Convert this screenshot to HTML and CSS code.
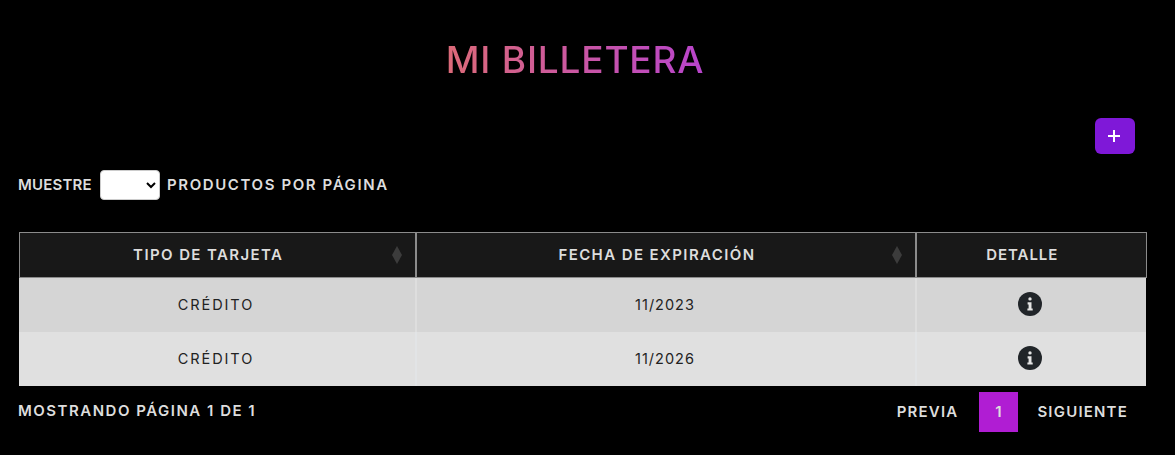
FILE: index.html
```html
<!DOCTYPE html>
<html lang="es">
<head>
  <meta charset="UTF-8" />
  <title>Mi Billetera</title>
  <link rel="stylesheet" href="styles.css">
</head>
<body>
  <h1 class="title"><span>MI BILLETERA</span></h1>
  <div class="actions">
    <button class="add-btn" type="button">
      <svg width="14" height="14" viewBox="0 0 14 14"><path d="M7 1v12M1 7h12" stroke="#fff" stroke-width="2"/></svg>
    </button>
  </div>
  <div class="length">
    <span class="length-first">MUESTRE</span>
    <select class="length-select"><option></option></select>
    <span>PRODUCTOS POR PÁGINA</span>
  </div>
  <table class="cards">
    <colgroup>
      <col class="col-type"><col class="col-date"><col class="col-detail">
    </colgroup>
    <thead>
      <tr>
        <th>TIPO DE TARJETA<i class="sort"></i></th>
        <th>FECHA DE EXPIRACIÓN<i class="sort"></i></th>
        <th class="th-detail">DETALLE</th>
      </tr>
    </thead>
    <tbody>
      <tr class="odd">
        <td>CRÉDITO</td>
        <td>11/2023</td>
        <td><svg class="info" width="24" height="24" viewBox="0 0 24 24"><circle cx="12" cy="12" r="12" fill="#212529"/><path d="M12 5.2a1.7 1.7 0 1 1 0 3.4a1.7 1.7 0 0 1 0-3.4zM9.6 10.2h3.9v6.2h1.2v2.2H9.4v-2.2h1.2v-4H9.6z" fill="#e4e4e4"/></svg></td>
      </tr>
      <tr class="even">
        <td>CRÉDITO</td>
        <td>11/2026</td>
        <td><svg class="info" width="24" height="24" viewBox="0 0 24 24"><circle cx="12" cy="12" r="12" fill="#212529"/><path d="M12 5.2a1.7 1.7 0 1 1 0 3.4a1.7 1.7 0 0 1 0-3.4zM9.6 10.2h3.9v6.2h1.2v2.2H9.4v-2.2h1.2v-4H9.6z" fill="#e4e4e4"/></svg></td>
      </tr>
    </tbody>
  </table>
  <div class="footer">
    <div class="info-text">MOSTRANDO PÁGINA 1 DE 1</div>
    <div class="pager">
      <span class="page-link">PREVIA</span>
      <span class="page-current">1</span>
      <span class="page-link">SIGUIENTE</span>
    </div>
  </div>
</body>
</html>
```

FILE: styles.css
```css
body {
  margin: 0;
  padding: 0 29px 0 18px;
  background-color: #000;
  color: #ddd;
  font-family: "Inter", sans-serif;
  font-size: 15px;
  font-weight: 600;
  height: 455px;
  box-sizing: border-box;
  overflow: hidden;
}
.title {
  margin: 0;
  padding: 37px 14px 0 0;
  height: 81px;
  box-sizing: border-box;
  text-align: center;
  font-family: "Inter", sans-serif;
  font-size: 37px;
  line-height: 46px;
  font-weight: 500;
  letter-spacing: 0.8px;
}
.title span {
  background: linear-gradient(90deg, #dc6a78, #b844cc);
  -webkit-background-clip: text;
  background-clip: text;
  color: transparent;
}
.actions {
  display: flex;
  justify-content: flex-end;
  padding-right: 11px;
  padding-top: 37px;
}
.add-btn {
  width: 40px;
  height: 36px;
  border: none;
  border-radius: 6px;
  background-color: #7f18d8;
  padding: 0 2px 0 0;
  display: flex;
  align-items: center;
  justify-content: center;
}
.length {
  display: flex;
  align-items: center;
  gap: 7px;
  margin-top: 16px;
  height: 30px;
  letter-spacing: 1.6px;
}
.length span {
  margin-bottom: 2px;
}
.length-first {
  width: 75px;
  letter-spacing: 0.2px;
}
.length-select {
  width: 60px;
  height: 30px;
  background-color: #fff;
  border: 1px solid #ccc;
  border-radius: 4px;
}
.cards {
  width: 1127px;
  margin: 32px 0 0 0.5px;
  border-collapse: collapse;
  table-layout: fixed;
  text-align: center;
}
.col-type { width: 397px; }
.col-date { width: 500px; }
.col-detail { width: 230px; }
.cards th {
  position: relative;
  height: 42px;
  padding: 0 18px 2px 0;
  background-color: #181818;
  border: 1px solid #8b8b8b;
  font-size: 15px;
  font-weight: 600;
  letter-spacing: 1.4px;
  color: #ddd;
}
.cards th + th {
  border-left-width: 2px;
}
.cards .th-detail {
  letter-spacing: 0.9px;
}
.sort {
  position: absolute;
  right: 13px;
  top: 13px;
  width: 10px;
  height: 18px;
  background-color: #3c3c3c;
  clip-path: polygon(50% 0, 100% 50%, 50% 100%, 0 50%);
}
.cards td {
  height: 52px;
  padding: 0 2px 2px 0;
  color: #222;
  font-size: 14.5px;
  font-weight: 400;
  letter-spacing: 1px;
  border-left: 2px solid #dedede;
}
.cards td:first-child {
  border-left: none;
  letter-spacing: 1.9px;
}
.odd td { background-color: #d5d5d5; }
.even td { background-color: #e0e0e0; border-left-color: #e2e4e6; }
.info { display: block; margin: 0 auto; }
.cards td:last-child { padding-right: 4px; }
.footer {
  display: flex;
  justify-content: space-between;
  margin-top: 6px;
  letter-spacing: 1.5px;
}
.info-text {
  padding-top: 9px;
}
.pager {
  display: flex;
  align-items: center;
  height: 40px;
  letter-spacing: 1.2px;
}
.page-link {
  padding: 0 18px 2px 19px;
}
.page-current {
  width: 39px;
  height: 40px;
  margin-left: 3px;
  line-height: 40px;
  text-align: center;
  background-color: #b01dd3;
  color: #ddd;
}
```
